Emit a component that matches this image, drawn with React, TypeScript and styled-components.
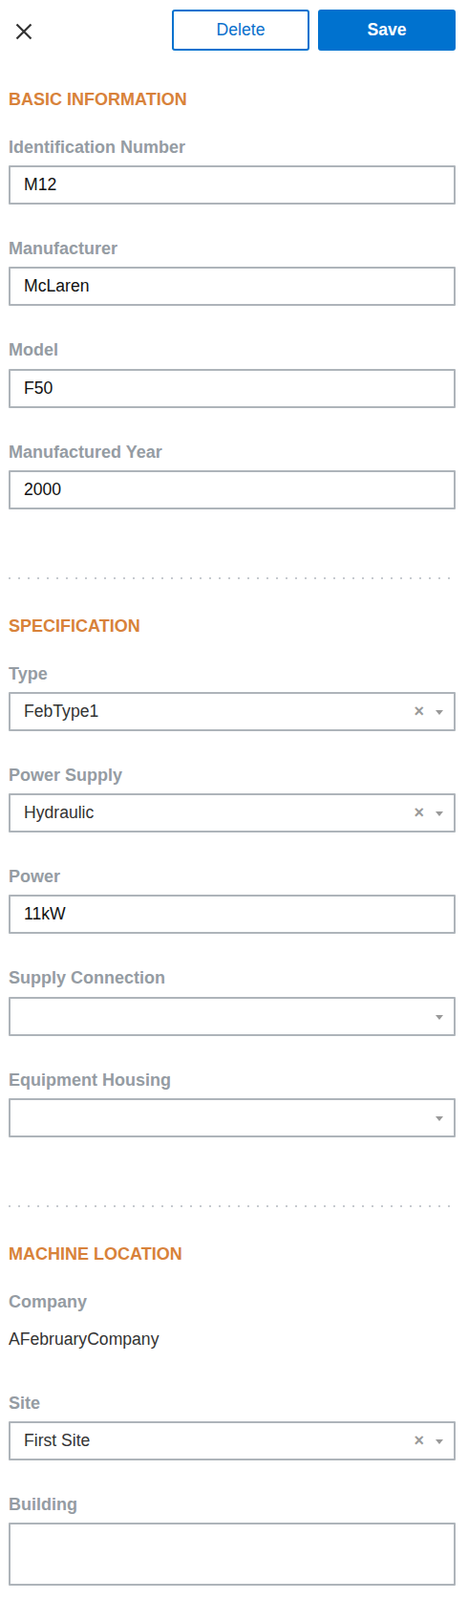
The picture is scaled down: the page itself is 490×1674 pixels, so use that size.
import React from "react";
import styled, { createGlobalStyle } from "styled-components";

const GlobalStyle = createGlobalStyle`
  html, body { margin: 0; padding: 0; background: #ffffff; }
  body { font-family: "Liberation Sans", Arial, Helvetica, sans-serif; }
  * { box-sizing: border-box; }
`;

const Page = styled.div`
  width: 490px;
  padding: 0 13px 17px 9px;
  font-family: "Liberation Sans", Arial, Helvetica, sans-serif;
`;

const Header = styled.div`
  display: flex;
  align-items: center;
  padding-top: 10px;
  margin-bottom: 39px;
`;

const CloseButton = styled.button`
  display: flex;
  align-items: center;
  justify-content: center;
  width: 18px;
  height: 18px;
  margin: 3px 0 0 7px;
  padding: 0;
  border: none;
  background: transparent;
  cursor: pointer;
`;

const Actions = styled.div`
  margin-left: auto;
  display: flex;
  gap: 9px;
`;

const ActionButton = styled.button<{ $primary?: boolean }>`
  width: 144px;
  height: 43px;
  border-radius: 3px;
  font-family: "Liberation Sans", Arial, sans-serif;
  font-size: 17.6px;
  font-weight: ${(p) => (p.$primary ? 700 : 400)};
  color: ${(p) => (p.$primary ? "#ffffff" : "#0a70cc")};
  background: ${(p) => (p.$primary ? "#0072cf" : "#ffffff")};
  border: 2px solid #0072cf;
  cursor: pointer;
`;

const Heading = styled.h2`
  margin: 0 0 24.8px;
  font-size: 18px;
  line-height: 25.2px;
  font-weight: 700;
  color: #d8823a;
  text-transform: uppercase;
`;

const Field = styled.div`
  & + & {
    margin-top: 34px;
  }
`;

const Label = styled.label`
  display: block;
  margin-bottom: 6px;
  font-size: 18px;
  line-height: 25.2px;
  font-weight: 700;
  color: #959ca3;
`;

const TextInput = styled.input`
  display: block;
  width: 100%;
  height: 41px;
  padding: 0 14px;
  border: 2px solid #aeb4ba;
  border-radius: 1px;
  font-family: "Liberation Sans", Arial, sans-serif;
  font-size: 17.6px;
  color: #111111;
  background: #ffffff;
  outline: none;
`;

const TextArea = styled.div`
  width: 100%;
  height: 66px;
  border: 2px solid #aeb4ba;
  border-radius: 1px;
`;

const SelectBox = styled.div`
  display: flex;
  align-items: center;
  width: 100%;
  height: 41px;
  padding: 0 11px 0 14px;
  border: 2px solid #aeb4ba;
  border-radius: 1px;
  background: #ffffff;
`;

const SelectValue = styled.span`
  flex: 1;
  font-size: 17.6px;
  color: #333333;
`;

const ClearIcon = styled.span`
  font-size: 18px;
  font-weight: 700;
  line-height: 1;
  color: #9a9a9a;
  margin-right: 12px;
  margin-top: -2px;
`;

const Caret = styled.span`
  width: 0;
  height: 0;
  border-left: 4.5px solid transparent;
  border-right: 4.5px solid transparent;
  border-top: 5px solid #999999;
  margin-top: 2px;
`;

const StaticValue = styled.div`
  height: 41px;
  display: flex;
  align-items: center;
  font-size: 17.6px;
  color: #333333;
`;

const Separator = styled.hr`
  margin: 71px 0 37px;
  height: 2px;
  border: none;
  background-image: linear-gradient(to right, #c6cacf 2px, transparent 2px);
  background-size: 10px 2px;
  background-repeat: repeat-x;
`;

const Section = styled.section``;

type Item =
  | { kind: "input"; label: string; value: string }
  | { kind: "select"; label: string; value?: string }
  | { kind: "static"; label: string; value: string }
  | { kind: "area"; label: string };

const CloseIcon = () => (
  <svg width="18" height="18" viewBox="0 0 18 18" fill="none">
    <path d="M1.5 1.5L16.5 16.5M16.5 1.5L1.5 16.5" stroke="#333333" strokeWidth="2.2" strokeLinecap="butt" />
  </svg>
);

const FieldView = ({ item }: { item: Item }) => {
  return (
    <Field>
      <Label>{item.label}</Label>
      {item.kind === "input" && <TextInput defaultValue={item.value} />}
      {item.kind === "select" && (
        <SelectBox>
          <SelectValue>{item.value ?? ""}</SelectValue>
          {item.value && <ClearIcon>×</ClearIcon>}
          <Caret />
        </SelectBox>
      )}
      {item.kind === "static" && <StaticValue>{item.value}</StaticValue>}
      {item.kind === "area" && <TextArea />}
    </Field>
  );
};

const sections: { title: string; items: Item[] }[] = [
  {
    title: "Basic Information",
    items: [
      { kind: "input", label: "Identification Number", value: "M12" },
      { kind: "input", label: "Manufacturer", value: "McLaren" },
      { kind: "input", label: "Model", value: "F50" },
      { kind: "input", label: "Manufactured Year", value: "2000" },
    ],
  },
  {
    title: "Specification",
    items: [
      { kind: "select", label: "Type", value: "FebType1" },
      { kind: "select", label: "Power Supply", value: "Hydraulic" },
      { kind: "input", label: "Power", value: "11kW" },
      { kind: "select", label: "Supply Connection" },
      { kind: "select", label: "Equipment Housing" },
    ],
  },
  {
    title: "Machine Location",
    items: [
      { kind: "static", label: "Company", value: "AFebruaryCompany" },
      { kind: "select", label: "Site", value: "First Site" },
      { kind: "area", label: "Building" },
    ],
  },
];

export default function App() {
  return (
    <>
      <GlobalStyle />
      <Page>
        <Header>
          <CloseButton aria-label="Close">
            <CloseIcon />
          </CloseButton>
          <Actions>
            <ActionButton>Delete</ActionButton>
            <ActionButton $primary>Save</ActionButton>
          </Actions>
        </Header>
        {sections.map((s, i) => (
          <React.Fragment key={s.title}>
            {i > 0 && <Separator />}
            <Section>
              <Heading>{s.title}</Heading>
              {s.items.map((it) => (
                <FieldView key={it.label} item={it} />
              ))}
            </Section>
          </React.Fragment>
        ))}
      </Page>
    </>
  );
}
